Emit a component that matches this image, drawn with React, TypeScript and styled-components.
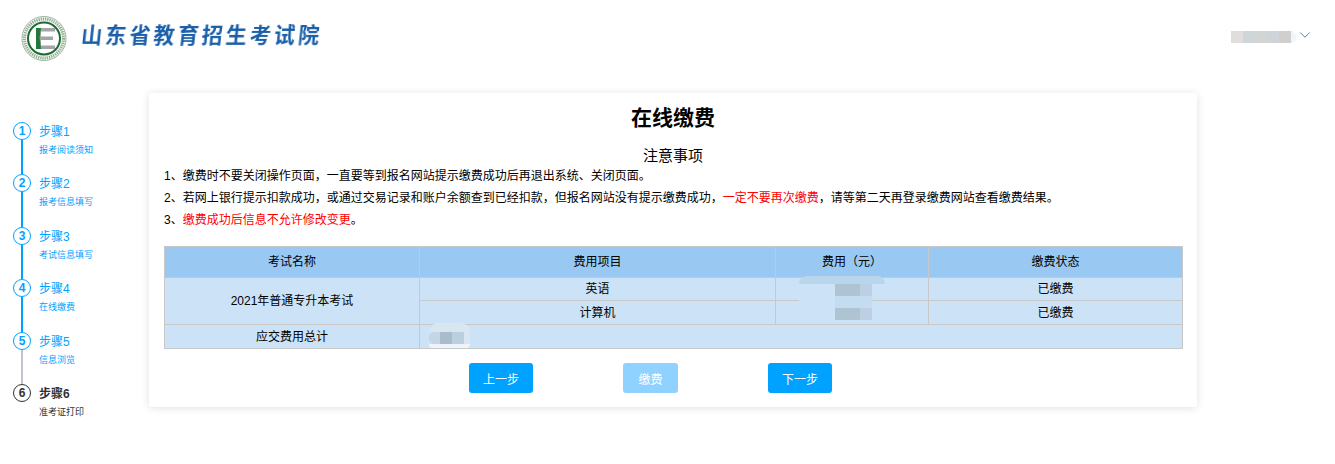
import React from "react";
import styled, { createGlobalStyle } from "styled-components";
import { ChevronDown } from "lucide-react";

const BLUE = "#00a2ff";

const steps = [
  { title: "步骤1", sub: "报考阅读须知", state: "done" },
  { title: "步骤2", sub: "报考信息填写", state: "done" },
  { title: "步骤3", sub: "考试信息填写", state: "done" },
  { title: "步骤4", sub: "在线缴费", state: "done" },
  { title: "步骤5", sub: "信息浏览", state: "last" },
  { title: "步骤6", sub: "准考证打印", state: "current" },
];

const GlobalStyle = createGlobalStyle`
  html, body {
    margin: 0;
    padding: 0;
    background: #fff;
    overflow: hidden;
    font-family: "Liberation Sans", "Noto Sans CJK SC", sans-serif;
    color: #000;
  }
`;

const Page = styled.div`
  width: 1335px;
  height: 464px;
`;

const Header = styled.header`
  height: 93px;
  display: flex;
  justify-content: space-between;
  align-items: flex-start;
  padding: 15px 21px 0 21px;
  box-sizing: border-box;
`;

const Brand = styled.div`
  display: flex;
  align-items: center;
  gap: 14px;
  height: 47px;
`;

const BrandName = styled.div`
  font-size: 21px;
  line-height: 30px;
  font-weight: 700;
  letter-spacing: 3.1px;
  color: #1a5fa8;
  padding-bottom: 5px;
  transform: skewX(-6deg);
  filter: blur(0.3px);
`;

const User = styled.div`
  display: flex;
  align-items: center;
  margin-top: 14px;
  svg {
    display: block;
    margin-top: -3px;
  }
`;

const Mosaic = styled.div`
  display: flex;
  flex-direction: column;
`;

const OverlayMosaic = styled(Mosaic)<{ $left: number; $top: number }>`
  position: absolute;
  left: ${(p) => p.$left}px;
  top: ${(p) => p.$top}px;
`;

const TileRow = styled.div`
  display: flex;
`;

const Tile = styled.div<{ $w: number; $h: number; $bg: string; $round?: string }>`
  width: ${(p) => p.$w}px;
  height: ${(p) => p.$h}px;
  background: ${(p) => p.$bg};
  border-radius: ${(p) => p.$round || "0"};
`;

const Body = styled.div`
  display: flex;
  align-items: flex-start;
`;

const StepList = styled.aside`
  width: 149px;
  flex: none;
  box-sizing: border-box;
  padding: 29px 0 0 13px;
`;

const Step = styled.div`
  display: flex;
  height: 52.4px;
  gap: 8px;
`;

const StepRail = styled.div`
  width: 18px;
  display: flex;
  flex-direction: column;
  align-items: center;
`;

const StepCircle = styled.div<{ $active: boolean }>`
  width: 18px;
  height: 18px;
  flex: none;
  box-sizing: border-box;
  border-radius: 50%;
  border: 1px solid ${(p) => (p.$active ? BLUE : "#303133")};
  color: ${(p) => (p.$active ? BLUE : "#303133")};
  font-size: 12px;
  font-weight: 700;
  line-height: 16px;
  text-align: center;
`;

const StepLine = styled.div<{ $color: string }>`
  width: 2px;
  flex: 1;
  background: ${(p) => p.$color};
`;

const StepText = styled.div<{ $active: boolean }>`
  padding-top: 1px;
  color: ${(p) => (p.$active ? BLUE : "#303133")};
  font-weight: ${(p) => (p.$active ? 400 : 700)};
`;

const StepTitle = styled.div`
  font-size: 12px;
  line-height: 18px;
`;

const StepSub = styled.div`
  font-size: 9px;
  line-height: 12px;
  margin-top: 3px;
  font-weight: 400;
`;

const Card = styled.main`
  position: relative;
  width: 1048px;
  height: 314px;
  box-sizing: border-box;
  padding: 11px 15px 0;
  background: #fff;
  border-radius: 2px;
  box-shadow: 0 1px 8px rgba(0, 0, 0, 0.12);
`;

const Title = styled.h1`
  margin: 0;
  font-size: 21px;
  line-height: 27px;
  font-weight: 700;
  text-align: center;
`;

const NoticeTitle = styled.h2`
  margin: 15px 0 -1px;
  font-size: 15px;
  line-height: 20px;
  font-weight: 400;
  text-align: center;
`;

const Notice = styled.p`
  margin: 0;
  font-size: 12px;
  line-height: 22px;
`;

const Red = styled.span`
  color: #f00;
`;

const Table = styled.table`
  width: 1018px;
  margin-top: 15px;
  border-collapse: collapse;
  table-layout: fixed;
  font-size: 12px;
  line-height: 16px;
  text-align: center;
  th,
  td {
    border: 1px solid #c8c8c8;
    padding: 0;
    font-weight: 400;
  }
  th {
    height: 30px;
    background: #99c9f2;
  }
  td {
    height: 23px;
    background: #cce3f7;
  }
  tbody tr:first-child td {
    height: 22px;
  }
`;

const Actions = styled.div`
  display: flex;
  gap: 90px;
  margin-top: 14px;
  padding-left: 305px;
`;

const Button = styled.button<{ $w: number; $disabled?: boolean }>`
  width: ${(p) => p.$w}px;
  height: 30px;
  padding: 0;
  border: 0;
  border-radius: 3px;
  color: #fff;
  font: inherit;
  font-size: 12px;
  background: ${(p) => (p.$disabled ? "#90d2ff" : BLUE)};
`;

const Logo = () => (
  <svg width="46" height="47" viewBox="0 0 46 47">
    <circle cx="23" cy="23.5" r="22" fill="#f3f6f1" stroke="#9db79e" strokeWidth="1" />
    <circle cx="23" cy="23.5" r="19.5" fill="none" stroke="#8aa98e" strokeWidth="3" strokeDasharray="1.2 1" />
    <circle cx="23" cy="23.5" r="16" fill="#fff" stroke="#1f6b35" strokeWidth="2" />
    <path d="M15 13h19v3.6H20v5h12v3.4H20v5.4h14V34H15z" fill="#a3a6a5" />
    <path d="M15 13h5l-1.4 9.5L20 34h-5z" fill="#1f7a3a" />
  </svg>
);

const App = () => (
  <Page>
    <GlobalStyle />
    <Header>
      <Brand>
        <Logo />
        <BrandName>山东省教育招生考试院</BrandName>
      </Brand>
      <User>
        <TileRow>
          <Tile $w={12} $h={12} $bg="#e0dedc" />
          <Tile $w={12} $h={12} $bg="#cfd6da" />
          <Tile $w={12} $h={12} $bg="#d3d5d4" />
          <Tile $w={12} $h={12} $bg="#ced4d9" />
          <Tile $w={12} $h={12} $bg="#cfcfcd" />
          <Tile $w={5} $h={12} $bg="#f0f5f8" $round="0 5px 5px 0" />
        </TileRow>
        <ChevronDown size={18} strokeWidth={1.2} color="#4f6f92" />
      </User>
    </Header>
    <Body>
      <StepList>
        {steps.map((s, i) => (
          <Step key={s.title}>
            <StepRail>
              <StepCircle $active={s.state !== "current"}>{i + 1}</StepCircle>
              {s.state !== "current" && (
                <StepLine $color={s.state === "done" ? BLUE : "#c0c4cc"} />
              )}
            </StepRail>
            <StepText $active={s.state !== "current"}>
              <StepTitle>{s.title}</StepTitle>
              <StepSub>{s.sub}</StepSub>
            </StepText>
          </Step>
        ))}
      </StepList>
      <Card>
        <Title>在线缴费</Title>
        <NoticeTitle>注意事项</NoticeTitle>
        <Notice>1、缴费时不要关闭操作页面，一直要等到报名网站提示缴费成功后再退出系统、关闭页面。</Notice>
        <Notice>
          2、若网上银行提示扣款成功，或通过交易记录和账户余额查到已经扣款，但报名网站没有提示缴费成功，
          <Red>一定不要再次缴费</Red>，请等第二天再登录缴费网站查看缴费结果。
        </Notice>
        <Notice>
          3、<Red>缴费成功后信息不允许修改变更</Red>。
        </Notice>
        <Table>
          <colgroup>
            <col width="255" />
            <col width="356" />
            <col width="153" />
            <col width="254" />
          </colgroup>
          <thead>
            <tr>
              <th>考试名称</th>
              <th>费用项目</th>
              <th>费用（元）</th>
              <th>缴费状态</th>
            </tr>
          </thead>
          <tbody>
            <tr>
              <td rowSpan={2}>2021年普通专升本考试</td>
              <td>英语</td>
              <td></td>
              <td>已缴费</td>
            </tr>
            <tr>
              <td>计算机</td>
              <td></td>
              <td>已缴费</td>
            </tr>
            <tr>
              <td>应交费用总计</td>
              <td colSpan={3}></td>
            </tr>
          </tbody>
        </Table>
        <Actions>
          <Button $w={64}>上一步</Button>
          <Button $w={55} $disabled>缴费</Button>
          <Button $w={64}>下一步</Button>
        </Actions>
        <OverlayMosaic $left={650} $top={183}>
          <Tile $w={86} $h={8} $bg="#b8d5ec" $round="20px 20px 0 0" />
          <TileRow>
            <Tile $w={36} $h={12} $bg="#cce3f7" />
            <Tile $w={25} $h={12} $bg="#aec4d2" />
            <Tile $w={12} $h={12} $bg="#bdcfe3" />
          </TileRow>
          <TileRow>
            <Tile $w={36} $h={12} $bg="#cce3f7" />
            <Tile $w={37} $h={12} $bg="#c4dcef" />
          </TileRow>
          <TileRow>
            <Tile $w={36} $h={12} $bg="#cce3f7" />
            <Tile $w={25} $h={12} $bg="#aec4d2" />
            <Tile $w={12} $h={12} $bg="#bdcfe3" />
          </TileRow>
        </OverlayMosaic>
        <OverlayMosaic $left={280} $top={230}>
          <Tile $w={41} $h={9} $bg="#d8e6f2" $round="12px 12px 0 0" />
          <TileRow>
            <Tile $w={11} $h={12} $bg="#c3d5e6" $round="5px 0 0 5px" />
            <Tile $w={12} $h={12} $bg="#a9bccc" />
            <Tile $w={12} $h={12} $bg="#bacfe0" />
            <Tile $w={6} $h={12} $bg="#d8e6f2" />
          </TileRow>
          <Tile $w={41} $h={4} $bg="#eef4fa" $round="0 0 12px 12px" />
        </OverlayMosaic>
      </Card>
    </Body>
  </Page>
);

export default App;
